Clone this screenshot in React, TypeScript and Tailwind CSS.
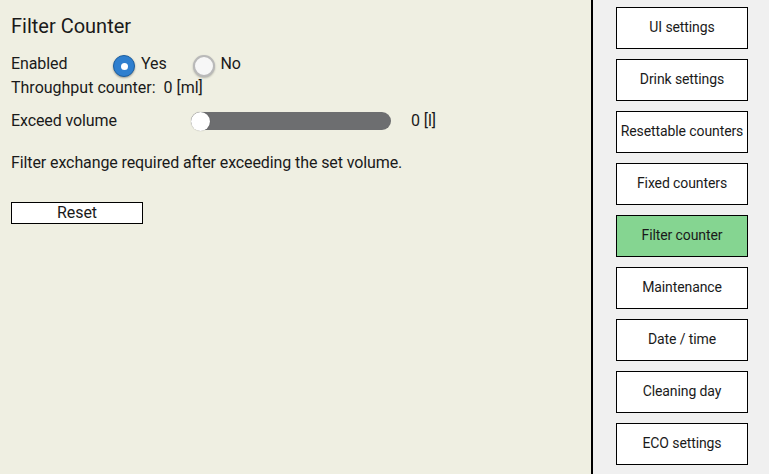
import React, { useState } from 'react';

const NAV_ITEMS = [
  'UI settings',
  'Drink settings',
  'Resettable counters',
  'Fixed counters',
  'Filter counter',
  'Maintenance',
  'Date / time',
  'Cleaning day',
  'ECO settings',
];

const Radio: React.FC<{ checked: boolean; label: string; onClick: () => void }> = ({ checked, label, onClick }) => (
  <button onClick={onClick} className="flex items-center gap-[6px]">
    {checked ? (
      <span className="w-[22px] h-[22px] rounded-full bg-[#2f7fcf] border border-[#1d5fa0] shadow-[0_1px_2px_rgba(0,0,0,0.35)] flex items-center justify-center mt-[4px]">
        <span className="w-[7px] h-[7px] rounded-full bg-white" />
      </span>
    ) : (
      <span className="w-[22px] h-[22px] rounded-full bg-[#f7f7f7] border-2 border-[#b9b9b9] shadow-[0_1px_2px_rgba(0,0,0,0.25)] mt-[4px]" />
    )}
    <span>{label}</span>
  </button>
);

const App: React.FC = () => {
  const [enabled, setEnabled] = useState(true);
  const active = 'Filter counter';

  return (
    <div className="flex w-[769px] h-[474px] overflow-hidden text-[16px] text-[#1a1a1a] font-['Roboto',sans-serif]">
      <div className="w-[591px] h-full bg-[#efefe2] pl-[11px] pt-[13px] tracking-[-0.1px]">
        <h1 className="text-[20px] leading-[26px] tracking-normal">Filter Counter</h1>
        <div className="flex items-center h-[24px] mt-[13px]">
          <span className="w-[102px]">Enabled</span>
          <Radio checked={enabled} label="Yes" onClick={() => setEnabled(true)} />
          <span className="w-[26px]" />
          <Radio checked={!enabled} label="No" onClick={() => setEnabled(false)} />
        </div>
        <div className="h-[22px] leading-[22px] mt-[1px] tracking-normal">Throughput counter:&nbsp; 0 [ml]</div>
        <div className="flex items-center h-[20px] mt-[12px]">
          <span className="w-[180px]">Exceed volume</span>
          <div className="w-[200px] h-[18px] rounded-[9px] bg-[#6d6e70] flex items-center">
            <span className="w-[19px] h-[19px] rounded-full bg-white shadow-[0_0_1px_rgba(0,0,0,0.4)]" />
          </div>
          <span className="ml-[20px]">0 [l]</span>
        </div>
        <p className="mt-[22px] leading-[20px]">Filter exchange required after exceeding the set volume.</p>
        <button className="mt-[29px] w-[132px] h-[22px] bg-white border border-black leading-[20px]">Reset</button>
      </div>
      <div className="w-[2px] h-full bg-black" />
      <div className="flex-1 h-full bg-[#f0f0f0] flex flex-col items-start pl-[23px] pt-[7px] gap-[10px]">
        {NAV_ITEMS.map(item => (
          <button
            key={item}
            className={`w-[132px] h-[42px] border border-black text-[14px] tracking-[-0.1px] pb-[2px] ${item === active ? 'bg-[#85d591]' : 'bg-white'}`}
          >
            {item}
          </button>
        ))}
      </div>
    </div>
  );
};

export default App;
